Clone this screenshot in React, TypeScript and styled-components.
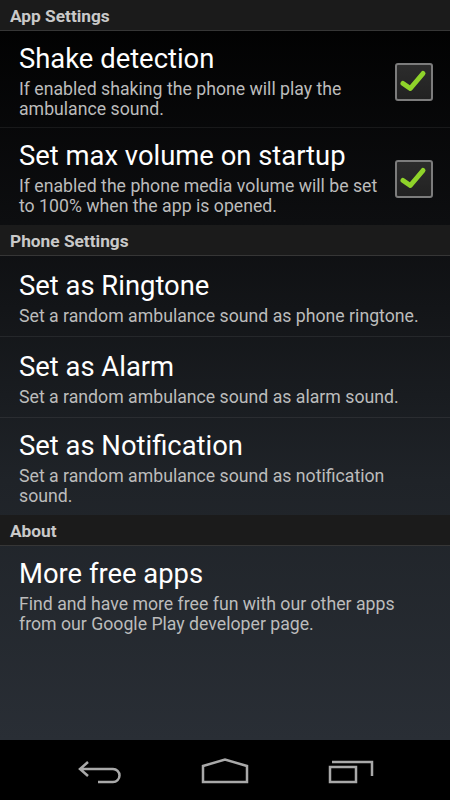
import React from "react";
import styled, { createGlobalStyle } from "styled-components";

const GlobalStyle = createGlobalStyle`
  html, body {
    margin: 0;
    padding: 0;
    background: #000;
  }
  body {
    font-family: Roboto, "Noto Sans", "Liberation Sans", sans-serif;
  }
`;

const Screen = styled.div`
  width: 450px;
  height: 800px;
  display: flex;
  flex-direction: column;
  overflow: hidden;
`;

const Content = styled.div`
  flex: 1;
  display: flex;
  flex-direction: column;
  background: linear-gradient(to bottom, #000000 0%, #0d0e10 30%, #1f2328 65%, #292e35 100%);
`;

const SectionHeader = styled.div`
  box-sizing: border-box;
  height: 31px;
  padding: 2px 10px 0;
  display: flex;
  align-items: center;
  background: #1b1b1b;
  border-bottom: 1px solid #363636;
  color: #c9c9c9;
  font-size: 17.3px;
  font-weight: 700;
`;

const Row = styled.div<{ $last?: boolean }>`
  box-sizing: border-box;
  min-height: 81px;
  padding: 13px 17px 8px 19px;
  display: flex;
  align-items: center;
  border-bottom: 1px solid ${(p) => (p.$last ? "transparent" : "rgba(255, 255, 255, 0.07)")};
`;

const TextBlock = styled.div<{ $withCheck?: boolean }>`
  flex: 1;
  display: flex;
  flex-direction: column;
  margin-right: ${(p) => (p.$withCheck ? "8px" : "7px")};
`;

const Title = styled.div`
  color: #ffffff;
  font-size: 27.4px;
  line-height: 30px;
`;

const Summary = styled.div`
  margin-top: 5px;
  color: #bcbcbc;
  font-size: 17.7px;
  line-height: 20px;
`;

const CheckBox = styled.div`
  box-sizing: border-box;
  width: 38px;
  height: 38px;
  flex: none;
  border: 2px solid #7c7c7c;
  border-radius: 3px;
  background: linear-gradient(#2c2c2c, #222);
  display: flex;
  align-items: center;
  justify-content: center;
`;

const NavBar = styled.div`
  height: 60px;
  background: #000;
  display: flex;
  justify-content: center;
`;

const NavButton = styled.div`
  width: 125px;
  display: flex;
  align-items: center;
  justify-content: center;
`;

const Check = () => (
  <CheckBox>
    <svg width="34" height="34" viewBox="0 0 34 34">
      <path
        d="M8 18.5 L15.3 23.5 L28 8.5"
        fill="none"
        stroke="#8fd32a"
        strokeWidth="5"
        strokeLinecap="round"
        strokeLinejoin="round"
        transform="translate(-2 0)"
      />
    </svg>
  </CheckBox>
);

const navStroke = {
  fill: "none",
  stroke: "#a9a9a9",
  strokeWidth: 2.5,
};

const BackIcon = () => (
  <svg width="48" height="32" viewBox="0 0 48 32">
    <path d="M12 8 L4 15 L12 22 M4 15 H37 A6.5 6.5 0 0 1 37 28 H22" {...navStroke} />
  </svg>
);

const HomeIcon = () => (
  <svg width="48" height="32" viewBox="0 0 48 32">
    <path d="M2 28 V12 L24 5.5 L46 12 V28 Z" {...navStroke} />
  </svg>
);

const RecentsIcon = () => (
  <svg width="48" height="32" viewBox="0 0 48 32">
    <rect x="4" y="13" width="26" height="15" {...navStroke} />
    <path d="M6 8 H46 V22" {...navStroke} />
  </svg>
);

type Pref = {
  title: string;
  summary: string;
  checked?: boolean;
};

const sections: { header: string; items: Pref[] }[] = [
  {
    header: "App Settings",
    items: [
      {
        title: "Shake detection",
        summary: "If enabled shaking the phone will play the ambulance sound.",
        checked: true,
      },
      {
        title: "Set max volume on startup",
        summary: "If enabled the phone media volume will be set to 100% when the app is opened.",
        checked: true,
      },
    ],
  },
  {
    header: "Phone Settings",
    items: [
      { title: "Set as Ringtone", summary: "Set a random ambulance sound as phone ringtone." },
      { title: "Set as Alarm", summary: "Set a random ambulance sound as alarm sound." },
      { title: "Set as Notification", summary: "Set a random ambulance sound as notification sound." },
    ],
  },
  {
    header: "About",
    items: [
      {
        title: "More free apps",
        summary: "Find and have more free fun with our other apps from our Google Play developer page.",
      },
    ],
  },
];

const App = () => {
  return (
    <Screen>
      <GlobalStyle />
      <Content>
        {sections.map((section) => (
          <React.Fragment key={section.header}>
            <SectionHeader>{section.header}</SectionHeader>
            {section.items.map((item, i) => (
              <Row key={item.title} $last={i === section.items.length - 1}>
                <TextBlock $withCheck={item.checked}>
                  <Title>{item.title}</Title>
                  <Summary>{item.summary}</Summary>
                </TextBlock>
                {item.checked && <Check />}
              </Row>
            ))}
          </React.Fragment>
        ))}
      </Content>
      <NavBar>
        <NavButton>
          <BackIcon />
        </NavButton>
        <NavButton>
          <HomeIcon />
        </NavButton>
        <NavButton>
          <RecentsIcon />
        </NavButton>
      </NavBar>
    </Screen>
  );
};

export default App;
